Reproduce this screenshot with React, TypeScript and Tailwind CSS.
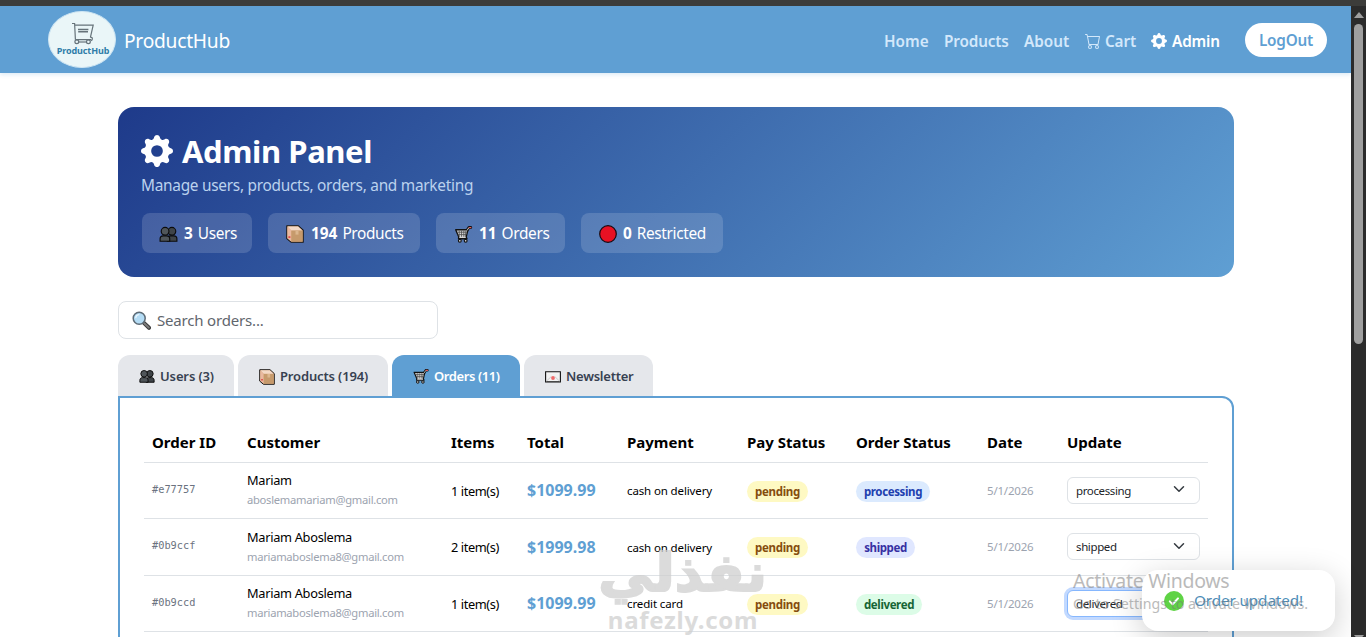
import type { ReactNode } from 'react';
import { BsCart, BsGearFill } from 'react-icons/bs';

type IconProps = { className?: string };

const UsersIcon = ({ className }: IconProps) => (
  <svg viewBox="0 0 20 18" className={className}>
    <g stroke="#0b0b0b" strokeWidth="1.2" fill="#3f4448">
      <circle cx="13.6" cy="5.6" r="4.1" />
      <path d="M8.8 16.2v-2.7c0-2 1.3-3.1 3.2-3.1h3.6c2 0 3.3 1.2 3.3 3.2v2.6z" />
      <circle cx="6.4" cy="5.6" r="4.1" fill="#50565a" />
      <path d="M1.1 16.2v-2.6c0-2 1.3-3.2 3.3-3.2H8c2 0 3.3 1.2 3.3 3.2v2.6z" fill="#50565a" />
    </g>
  </svg>
);

const PackageIcon = ({ className }: IconProps) => (
  <svg viewBox="0 0 18 18" className={className}>
    <path d="M.8.8h11.6l4.8 4.4v12H5L.8 13.6z" fill="#d9a57c" stroke="#141414" strokeWidth="1.1" strokeLinejoin="round" />
    <path d="M1.4 1.4h10.8l4.2 4H5.3z" fill="#f3d9c6" />
    <path d="M1.4 1.8 5.2 5.6v10.8l-3.8-3.2z" fill="#e9b9a0" />
    <path d="M5.4 5.6h11.2v11H5.4z" fill="#c69a6c" />
    <path d="M9.5 5.6h3v4h-3z" fill="#dcb78f" />
    <path d="M2.4 11.2h2v1.8h-2z" fill="#e34b4b" />
  </svg>
);

const TrolleyIcon = ({ className }: IconProps) => (
  <svg viewBox="0 0 19 18" className={className}>
    <path d="M13.2 4.6 15.2 1.6h2" fill="none" stroke="#111" strokeWidth="3" strokeLinecap="round" strokeLinejoin="round" />
    <path d="M1.2 4h13l-1.8 7.6.8 1.9H4.2l.2-2z" fill="#d4d4d4" stroke="#111" strokeWidth="1.4" strokeLinejoin="round" />
    <path d="M2.6 6.6h10.6M3.4 9.1h9.2M5 5v6.4M7.4 5v6.4M9.8 5v6.4M12 5l-.6 6.4" stroke="#4a4a4a" strokeWidth=".8" />
    <path d="M13.4 4.6 15.2 1.7" stroke="#d5d5d5" strokeWidth="1" />
    <path d="M15.6 1.6h1.7" stroke="#e45a5a" strokeWidth="1.3" strokeLinecap="round" />
    <circle cx="5.6" cy="15.6" r="1.5" fill="#ddd" stroke="#111" strokeWidth="1.2" />
    <circle cx="11.8" cy="15.6" r="1.5" fill="#ddd" stroke="#111" strokeWidth="1.2" />
  </svg>
);

const RedCircleIcon = ({ className }: IconProps) => (
  <svg viewBox="0 0 18 18" className={className}>
    <circle cx="9" cy="9" r="8.3" fill="#e81123" stroke="#1a0a10" strokeWidth="1.2" />
  </svg>
);

const EnvelopeIcon = ({ className }: IconProps) => (
  <svg viewBox="0 0 16 12" className={className}>
    <path d="M.6.7h14.8v10.2H.6z" fill="#f2f2f2" stroke="#111" strokeWidth="1.1" />
    <path d="m1.4 10.2 4.8-4.6M14.6 10.2 9.8 5.6" stroke="#bbb" strokeWidth=".7" />
    <circle cx="8" cy="7" r="1.9" fill="#ee6a6a" />
  </svg>
);

const MagnifierIcon = ({ className }: IconProps) => (
  <svg viewBox="0 0 19 19" className={className}>
    <path d="m11.6 11.6 5.4 5.2" stroke="#3b3b3b" strokeWidth="4" strokeLinecap="round" />
    <path d="m12.2 12.2 4.6 4.4" stroke="#7d7d7d" strokeWidth="2" strokeLinecap="round" />
    <circle cx="7.2" cy="7.2" r="6" fill="#b4dcf5" stroke="#5d6b76" strokeWidth="1.5" />
    <path d="M3.8 6.6a3.6 3.6 0 0 1 3-2.9" stroke="#e9f6fe" strokeWidth="1.3" fill="none" strokeLinecap="round" />
  </svg>
);

const Logo = () => (
  <div className="flex h-[57px] w-[68px] flex-col items-center rounded-[50%] border border-[#cfe6f3] bg-[#eaf6f8]">
    <svg viewBox="0 0 24 23" className="ml-[2px] mt-[10px] h-[23px] w-6" fill="none" stroke="#66737a" strokeWidth="1.2">
      <path d="M1 1.5h2.6l.8 16.1M4 3.1h18.2l-2.8 12.3M4.4 17.6h15.8" />
      <path d="M7 7.4h10.4M7.2 9.8h9.8" strokeWidth="1.5" />
      <path d="M19.4 15.4c2.4-.6 2.6 2.4.6 3.4" />
      <circle cx="5.8" cy="19.8" r="1.9" />
      <circle cx="17.4" cy="19.8" r="1.9" />
      <path d="M7.7 20h7.8" />
    </svg>
    <span className="ml-[2px] mt-px whitespace-nowrap text-[9px] font-bold leading-[9px] tracking-[-0.1px] text-[#2f7da8]">ProductHub</span>
  </div>
);

const Stat = ({ icon, value, label, className }: { icon: ReactNode; value: string; label: string; className: string }) => (
  <div className={`flex h-10 items-center rounded-lg bg-white/15 pt-[2px] text-[15.4px] tracking-[-0.36px] text-white ${className}`}>
    {icon}
    <b className="ml-[6px] mr-[5px] tracking-normal">{value}</b>
    {label}
  </div>
);

const Tab = ({ icon, label, active, className }: { icon: ReactNode; label: string; active?: boolean; className: string }) => (
  <div
    className={`flex h-[41px] items-center gap-[5px] rounded-t-xl pl-[21px] pt-[2px] text-[13px] font-semibold ${
      active ? 'bg-[#5f9fd3] text-white' : 'bg-[#e5e7eb] text-[#374151]'
    } ${className}`}
  >
    {icon}
    {label}
  </div>
);

const badgeTone: Record<string, string> = {
  pending: 'bg-[#fef9c3] text-[#854d0e] tracking-[-0.28px] w-[61px]',
  processing: 'bg-[#dbeafe] text-[#1e40af] tracking-[-0.38px] w-[74px]',
  shipped: 'bg-[#e0e7ff] text-[#3730a3] tracking-[-0.38px] w-[59px]',
  delivered: 'bg-[#dcfce7] text-[#166534] tracking-[-0.38px] w-[66px]',
};

const Badge = ({ label }: { label: string }) => (
  <span className={`mt-[2px] flex h-[21px] items-center justify-center rounded-full pt-px text-[11.5px] font-bold ${badgeTone[label]}`}>{label}</span>
);

const orders = [
  { id: '#e77757', name: 'Mariam', email: 'aboslemamariam@gmail.com', items: '1 item(s)', total: '$1099.99', pay: 'cash on delivery', status: 'processing', height: 'h-14' },
  { id: '#0b9ccf', name: 'Mariam Aboslema', email: 'mariamaboslema8@gmail.com', items: '2 item(s)', total: '$1999.98', pay: 'cash on delivery', status: 'shipped', height: 'h-[57px]' },
  { id: '#0b9ccd', name: 'Mariam Aboslema', email: 'mariamaboslema8@gmail.com', items: '1 item(s)', total: '$1099.99', pay: 'credit card', status: 'delivered', height: 'h-14', focused: true },
];

const headers = ['Order ID', 'Customer', 'Items', 'Total', 'Payment', 'Pay Status', 'Order Status', 'Date', 'Update'];

const OrdersTable = () => (
  <table className="w-[1064px] table-fixed border-collapse text-left text-black">
    <colgroup>
      <col className="w-[95px]" />
      <col className="w-[204px]" />
      <col className="w-[76px]" />
      <col className="w-[100px]" />
      <col className="w-[120px]" />
      <col className="w-[109px]" />
      <col className="w-[131px]" />
      <col className="w-[80px]" />
      <col className="w-[149px]" />
    </colgroup>
    <thead>
      <tr className="h-10 border-b border-[#dee2e6]">
        {headers.map((h) => (
          <th key={h} className="whitespace-nowrap px-2 pt-px text-[15px] font-bold">{h}</th>
        ))}
      </tr>
    </thead>
    <tbody>
      {orders.map((o) => (
        <tr key={o.id} className={`border-b border-[#dee2e6] ${o.height}`}>
          <td className="px-2 pb-px font-[DejaVu_Sans_Mono,monospace] text-[10.3px] text-[#6b7280]">{o.id}</td>
          <td className="whitespace-nowrap px-2 pt-px">
            <div className="text-[12.8px] leading-[19px] tracking-[-0.3px]">{o.name}</div>
            <div className="text-[11.2px] leading-5 tracking-[-0.27px] text-[#9ca3af]">{o.email}</div>
          </td>
          <td className="whitespace-nowrap px-2 pt-[3px] text-[12.8px] tracking-[-0.4px]">{o.items}</td>
          <td className="px-2 text-[16px] font-bold leading-6 text-[#5f9fd3]">{o.total}</td>
          <td className="whitespace-nowrap px-2 pt-[2px] text-[11.5px] tracking-[-0.13px]">{o.pay}</td>
          <td className="px-2"><Badge label="pending" /></td>
          <td className="px-2"><Badge label={o.status} /></td>
          <td className="px-2 pt-px text-[11.5px] tracking-[-0.2px] text-[#9ca3af]">5/1/2026</td>
          <td className="px-2">
            <div
              className={`flex h-[27px] w-[133px] items-center justify-between rounded-md border bg-white pl-2 pr-[14px] pt-px text-[11.5px] tracking-[-0.38px] text-[#212529] ${
                o.focused ? 'border-[#86b7fe] ring-3 ring-[#c2d9ff]' : 'border-[#dee2e6]'
              }`}
            >
              {o.status}
              <svg viewBox="0 0 16 16" className="-mt-[3px] h-3 w-3" fill="none" stroke="#343a40" strokeWidth="2" strokeLinecap="round" strokeLinejoin="round">
                <path d="m2 5 6 6 6-6" />
              </svg>
            </div>
          </td>
        </tr>
      ))}
    </tbody>
  </table>
);

export default function App() {
  return (
    <div className="relative flex h-[637px] w-[1366px] flex-col overflow-hidden bg-white font-[Noto_Sans,sans-serif]">
      <div className="h-[6px] shrink-0 bg-[#3c3c3a]" />
      <div className="flex min-h-0 flex-1">
        <div className="flex w-[1351px] flex-col overflow-hidden">
          <nav className="flex h-[67px] shrink-0 items-center bg-[#5f9fd3] pl-12 pr-6 shadow-[0_2px_4px_rgba(95,159,211,0.2)]">
            <Logo />
            <span className="ml-2 mt-[3px] text-[19.2px] tracking-[-0.25px] text-white">ProductHub</span>
            <div className="ml-auto flex items-center pt-[3px] text-[15.3px] font-semibold text-[#d3e8fb]">
              <span className="w-[60px]">Home</span>
              <span className="w-[80px] tracking-[-0.15px]">Products</span>
              <span className="w-[61px]">About</span>
              <span className="flex w-[66px] items-center gap-1 tracking-[-0.15px]"><BsCart className="h-4 w-4" />Cart</span>
              <span className="flex w-[94px] items-center gap-[5px] tracking-[-0.15px] text-white"><BsGearFill className="h-4 w-4" />Admin</span>
            </div>
            <button className="h-[34px] w-[82px] rounded-full bg-white pt-[2px] text-[15.3px] font-semibold tracking-[-0.2px] text-[#5f9fd3]">LogOut</button>
          </nav>

          <main className="ml-[118px] mt-[34px] w-[1116px]">
            <section className="flex h-[170px] flex-col rounded-2xl bg-[linear-gradient(135deg,#1e3a8a,#5f9fd3)] pl-6">
              <h1 className="-ml-px mt-[24px] flex h-10 items-center gap-[9px] text-[31px] font-bold tracking-[-0.4px] text-white">
                <BsGearFill className="h-8 w-8" />
                Admin Panel
              </h1>
              <p className="-ml-px mt-[3px] h-6 text-[15.4px] leading-6 tracking-[-0.27px] text-[#bbd2ee]">Manage users, products, orders, and marketing</p>
              <div className="mt-[15px] flex gap-4">
                <Stat icon={<UsersIcon className="h-[17px] w-[19px]" />} value="3" label="Users" className="w-[110px] pl-[17px]" />
                <Stat icon={<PackageIcon className="mr-px h-[18px] w-[18px]" />} value="194" label="Products" className="w-[152px] pl-[18px]" />
                <Stat icon={<TrolleyIcon className="h-[17px] w-[19px]" />} value="11" label="Orders" className="w-[129px] pl-[18px]" />
                <Stat icon={<RedCircleIcon className="h-[18px] w-[18px]" />} value="0" label="Restricted" className="w-[142px] pl-[18px]" />
              </div>
            </section>

            <div className="mt-6 flex h-[38px] w-80 items-center gap-[6px] rounded-lg border border-[#dee2e6] pl-[13px] text-[15px] tracking-[-0.18px] text-[#5f666d]">
              <MagnifierIcon className="h-[19px] w-[19px]" />
              Search orders...
            </div>

            <div className="mt-4 flex gap-1">
              <Tab icon={<UsersIcon className="h-[15px] w-4" />} label="Users (3)" className="w-[116px] tracking-[-0.12px]" />
              <Tab icon={<PackageIcon className="h-4 w-4" />} label="Products (194)" className="w-[150px] tracking-[-0.15px]" />
              <Tab icon={<TrolleyIcon className="h-[15px] w-4" />} label="Orders (11)" active className="w-[128px] tracking-[-0.4px]" />
              <Tab icon={<EnvelopeIcon className="h-3 w-4" />} label="Newsletter" className="w-[129px] tracking-[-0.25px]" />
            </div>

            <section className="h-[400px] rounded-tr-xl border-2 border-[#5f9fd3] pl-[24px] pt-[24px]">
              <OrdersTable />
            </section>
          </main>
        </div>

        <div className="flex w-[15px] flex-col items-center bg-[#2b2b2b]">
          <svg viewBox="0 0 10 6" className="mt-[6px] h-[6px] w-[10px]"><path d="M5 0l5 6H0z" fill="#9f9f9f" /></svg>
          <div className="mt-[6px] h-[320px] w-[9px] rounded-full bg-[#9f9f9f]" />
          <svg viewBox="0 0 10 6" className="-mb-[4px] mt-auto h-[6px] w-[10px]"><path d="M0 0h10L5 6z" fill="#9f9f9f" /></svg>
        </div>
      </div>

      <div className="absolute left-[600px] top-[541px] flex w-[166px] flex-col items-center text-[#cfcfcf] opacity-75">
        <span dir="rtl" lang="ar" className="h-[64px] origin-center scale-x-[1.06] whitespace-nowrap font-[DejaVu_Sans,sans-serif] text-[52px] font-bold leading-[64px] [-webkit-text-stroke:2px_#cfcfcf]">نفذلي</span>
        <span className="h-[30px] whitespace-nowrap text-[24px] font-bold leading-[30px] tracking-[0.7px]">nafezly.com</span>
      </div>

      <div className="absolute left-[1142px] top-[570px] flex h-[61px] w-[193px] items-center gap-[10px] rounded-2xl bg-white pl-[22px] text-[15.3px] tracking-[-0.13px] text-[#4d8db8] shadow-[0_8px_32px_rgba(0,0,0,0.2)]">
        <svg viewBox="0 0 20 20" className="h-5 w-5">
          <circle cx="10" cy="10" r="10" fill="#5fd345" />
          <path d="m5.8 10.4 2.8 2.8 5.4-5.8" fill="none" stroke="#fff" strokeWidth="2" strokeLinecap="round" strokeLinejoin="round" />
        </svg>
        Order updated!
      </div>

      <div className="absolute left-[1073px] top-[568px] whitespace-nowrap text-[#777] opacity-50">
        <div className="text-[19.5px] leading-[26px] tracking-[-0.3px]">Activate Windows</div>
        <div className="text-[14.2px] leading-[20px]">Go to Settings to activate Windows.</div>
      </div>
    </div>
  );
}
